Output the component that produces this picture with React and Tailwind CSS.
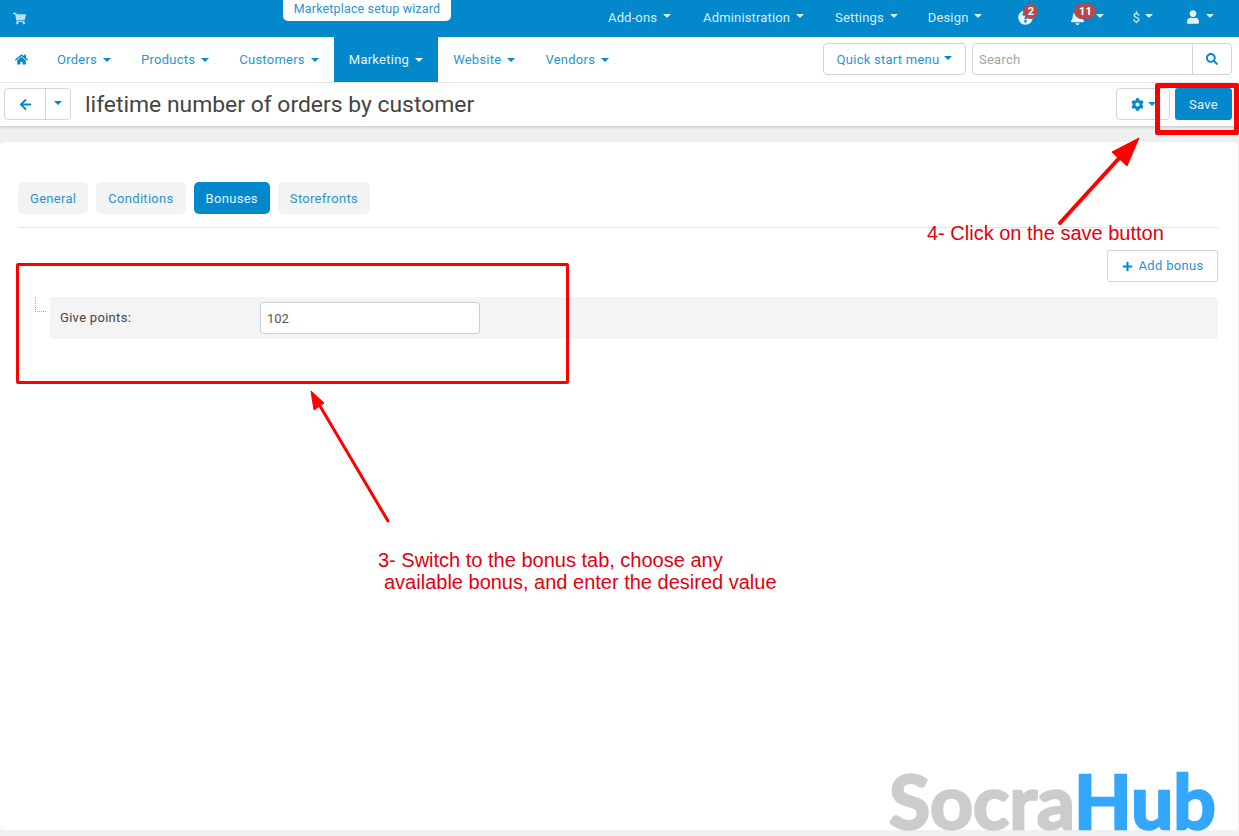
import React from 'react'
import { FaShoppingCart, FaHome, FaArrowLeft, FaCog, FaSearch, FaPlus, FaBell, FaUser, FaQuestionCircle } from 'react-icons/fa'

const TOP_ITEMS = [
  { label: 'Add-ons', className: 'ml-[157px]' },
  { label: 'Administration', className: 'ml-[32px]' },
  { label: 'Settings', className: 'ml-[31px]' },
  { label: 'Design', className: 'ml-[30px]' },
]

const NAV_ITEMS = [
  { label: 'Orders' },
  { label: 'Products' },
  { label: 'Customers' },
  { label: 'Marketing', active: true },
  { label: 'Website' },
  { label: 'Vendors' },
]

const TABS = [
  { label: 'General' },
  { label: 'Conditions' },
  { label: 'Bonuses', active: true },
  { label: 'Storefronts' },
]

function Caret({ className = '' }) {
  return <span className={`inline-block w-0 h-0 border-x-[4px] border-t-[4px] border-x-transparent border-t-current ${className}`} />
}

function Badge({ children, className = '' }) {
  return (
    <span className={`absolute h-[15px] rounded-full bg-[#b54a4e] text-white text-[11px] font-bold leading-[15px] text-center ${className}`}>
      {children}
    </span>
  )
}

function TopBar() {
  return (
    <div className="h-[37px] bg-[#0388cc] flex items-start text-[13px] text-[#d9eef8] tracking-[0.15px]">
      <FaShoppingCart className="mt-[12px] ml-[13px] w-[13px] h-[13px] text-[#b9dff2]" />
      <div className="ml-[257px] w-[168px] h-[21px] bg-white rounded-b-[5px] text-[#2a94d0] text-center text-[12.5px] leading-[18px]">
        Marketplace setup wizard
      </div>
      {TOP_ITEMS.map((item) => (
        <div key={item.label} className={`flex items-center h-[35px] gap-[6px] ${item.className}`}>
          {item.label}
          <Caret className="-mt-[3px]" />
        </div>
      ))}
      <div className="relative ml-[36px] mt-[10px] w-[15px] h-[15px]">
        <FaQuestionCircle className="w-[15px] h-[15px] text-[#e6f3fa]" />
        <Badge className="-top-[6px] left-[5px] w-[15px]">2</Badge>
      </div>
      <div className="relative ml-[37px] mt-[10px] flex items-center gap-[11px]">
        <FaBell className="w-[15px] h-[15px] text-[#e6f3fa]" />
        <Caret className="-mt-[3px]" />
        <Badge className="-top-[6px] left-[4px] w-[22px]">11</Badge>
      </div>
      <div className="ml-[28px] flex items-center h-[35px] gap-[5px]">
        $<Caret className="-mt-[3px]" />
      </div>
      <div className="ml-[34px] mt-[10px] flex items-center gap-[7px]">
        <FaUser className="w-[12px] h-[14px] text-[#e6f3fa]" />
        <Caret className="-mt-[3px]" />
      </div>
    </div>
  )
}

function NavBar() {
  return (
    <div className="h-[46px] bg-white border-b border-[#eeeeee] flex items-start text-[13px] text-[#2a94d0] tracking-[0.25px]">
      <div className="h-[45px] w-[42px] flex items-center justify-center">
        <FaHome className="w-[13px] h-[13px] text-[#0388cc]" />
      </div>
      {NAV_ITEMS.map((item) => (
        <div
          key={item.label}
          className={`h-[45px] px-[15px] flex items-center gap-[6px] ${item.active ? 'bg-[#0388cc] text-[#e6f3fa]' : ''}`}
        >
          {item.label}
          <Caret className={item.active ? 'text-white' : 'text-[#0388cc]'} />
        </div>
      ))}
      <div className="ml-auto mt-[6px] mr-[7px] flex gap-[6px]">
        <div className="w-[143px] h-[32px] border border-[#d4d4d4] rounded-[4px] flex items-center justify-center gap-[5px]">
          <span className="mt-[1px]">Quick start menu</span>
          <Caret className="-mt-[2px] text-[#0388cc]" />
        </div>
        <div className="w-[260px] h-[32px] border border-[#d4d4d4] rounded-[4px] flex">
          <div className="flex-1 px-[6px] leading-[32px] text-[#a3a3a3]">Search</div>
          <div className="w-[39px] border-l border-[#d4d4d4] flex items-center justify-center">
            <FaSearch className="w-[12px] h-[12px] text-[#0388cc]" />
          </div>
        </div>
      </div>
    </div>
  )
}

function Toolbar() {
  return (
    <div className="h-[43px] bg-white shadow-[0_1px_3px_rgba(0,0,0,0.2)] relative flex items-start pl-[4px] pt-[5px] pr-[7px]">
      <div className="flex h-[32px] w-[67px] border border-[#d4d4d4] rounded-[4px] text-[#0388cc]">
        <div className="w-[41px] border-r border-[#d4d4d4] flex items-center justify-center">
          <FaArrowLeft className="w-[13px] h-[13px]" />
        </div>
        <div className="flex-1 flex items-center justify-center">
          <Caret className="-mt-[2px]" />
        </div>
      </div>
      <h1 className="ml-[14px] text-[22.9px] leading-[34px] text-[#444444]">lifetime number of orders by customer</h1>
      <div className="ml-auto flex gap-[5px]">
        <div className="w-[54px] h-[32px] border border-[#d4d4d4] rounded-[4px] flex items-center pl-[14px] gap-[4px] text-[#0388cc]">
          <FaCog className="w-[13px] h-[13px]" />
          <Caret />
        </div>
        <div className="w-[57px] h-[32px] bg-[#0388cc] rounded-[3px] text-[13px] text-[#e6f3fa] flex items-center justify-center tracking-[0.3px] pt-[1px]">
          Save
        </div>
      </div>
    </div>
  )
}

function Content() {
  return (
    <div className="mt-[16px] mr-[1px] h-[688px] bg-white rounded-[4px] pl-[18px] pr-[20px] pt-[40px] text-[13px] tracking-[0.3px]">
      <div className="flex gap-[8px] h-[46px] border-b border-[#e6e6e6]">
        {TABS.map((tab) => (
          <div
            key={tab.label}
            className={`h-[32px] px-[12px] rounded-[5px] leading-[34px] ${tab.active ? 'bg-[#0388cc] text-[#e6f3fa]' : 'bg-[#f3f3f3] text-[#2a94d0]'}`}
          >
            {tab.label}
          </div>
        ))}
      </div>
      <div className="flex justify-end mt-[22px]">
        <div className="w-[111px] h-[32px] border border-[#d4d4d4] rounded-[3px] flex items-center justify-center gap-[6px] text-[#2a94d0]">
          <FaPlus className="w-[11px] h-[11px] text-[#0388cc]" />
          Add bonus
        </div>
      </div>
      <div className="flex mt-[15px] ml-[17px]">
        <div className="w-[11px] h-[15px] mr-[4px] border-l border-b border-dotted border-[#aaaaaa]" />
        <div className="flex-1 h-[42px] bg-[#f4f4f4] rounded-[3px] flex items-center pl-[10px] text-[#444444]">
          <div className="w-[200px] -mt-[1px]">Give points:</div>
          <div className="w-[220px] h-[32px] bg-white border border-[#cfcfcf] rounded-[3px] pl-[6px] leading-[32px] tracking-normal text-[#555555]">102</div>
        </div>
      </div>
    </div>
  )
}

function Annotations() {
  return (
    <>
      <div className="absolute left-[16px] top-[263px] w-[553px] h-[121px] border-[3px] border-[#ff0000] rounded-[2px]" />
      <div className="absolute left-[1155px] top-[83px] w-[84px] h-[52px] border-[5px] border-[#ff0000] rounded-[2px]" />
      <svg className="absolute left-0 top-0 pointer-events-none" width="1239" height="836" fill="#ff0000" stroke="#ff0000">
        <line x1="1060" y1="223" x2="1122" y2="155" strokeWidth="4" strokeLinecap="round" />
        <polygon points="1139,138 1127,166 1112,152" strokeWidth="1" />
        <line x1="388" y1="521" x2="320" y2="406" strokeWidth="3" strokeLinecap="round" />
        <polygon points="311,391 324,403 314,410" strokeWidth="1" />
      </svg>
      <div className="absolute left-[927px] top-[222px] font-['Liberation_Sans',sans-serif] text-[20px] leading-[22px] text-[#e3000f] whitespace-nowrap">
        4- Click on the save button
      </div>
      <div className="absolute left-[378px] top-[549px] font-['Liberation_Sans',sans-serif] text-[20px] leading-[22px] text-[#e3000f] whitespace-nowrap">
        <div>3- Switch to the bonus tab, choose any</div>
        <div className="pl-[6px]">available bonus, and enter the desired value</div>
      </div>
      <div className="absolute left-[889px] top-[760px] font-['Lato',sans-serif] font-bold text-[75px] leading-[80px] tracking-[0px] [-webkit-text-stroke-width:2.5px] whitespace-nowrap text-[#cccccc]">
        Socra<span className="text-[#33a7fd]">Hub</span>
      </div>
    </>
  )
}

export default function App() {
  return (
    <div className="relative w-[1239px] h-[836px] overflow-hidden bg-[#eef0f1] font-['Roboto',sans-serif]">
      <TopBar />
      <NavBar />
      <Toolbar />
      <Content />
      <Annotations />
    </div>
  )
}
